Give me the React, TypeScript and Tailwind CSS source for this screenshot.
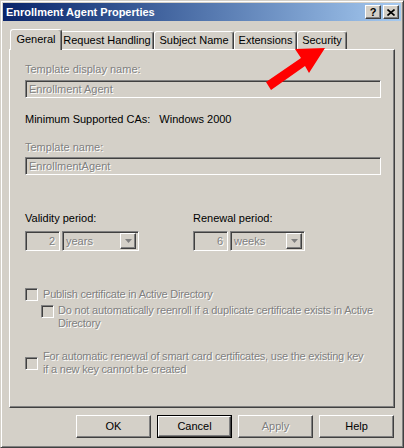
const raised =
  "border border-t-white border-l-white border-r-[#404040] border-b-[#404040] shadow-[inset_-1px_-1px_0_#808080]";
const sunken =
  "border border-t-[#808080] border-l-[#808080] border-r-white border-b-white shadow-[inset_1px_1px_0_#404040]";
const dim = "text-[#808080] [text-shadow:1px_1px_0_#fff]";

function Tab({ label, width, active }: { label: string; width: number; active?: boolean }) {
  return (
    <div
      style={{ width }}
      className={
        "flex items-start justify-center rounded-t-[3px] border border-b-0 border-t-white border-l-white border-r-[#404040] shadow-[inset_-1px_0_0_#808080] bg-[#d4d0c8] " +
        (active ? "relative z-10 -mx-[2px] h-[21px] pt-[3px] -mb-px" : "h-[18px] pt-[2px]")
      }
    >
      {label}
    </div>
  );
}

function Combo({ value, x }: { value: string; x: string }) {
  return (
    <div className={`flex h-[20px] ${x} ${sunken} items-center bg-[#d4d0c8] pl-[3px] pr-[2px]`}>
      <span className={`flex-1 ${dim}`}>{value}</span>
      <div className={`flex h-[16px] w-[16px] items-center justify-center ${raised} bg-[#d4d0c8]`}>
        <svg width="7" height="4" viewBox="0 0 7 4">
          <path d="M0 0h7L3.5 4z" fill="#808080" />
        </svg>
      </div>
    </div>
  );
}

function NumBox({ value }: { value: string }) {
  return (
    <div className={`flex h-[20px] w-[35px] ${sunken} items-center justify-end bg-[#d4d0c8] pr-[4px] ${dim}`}>
      {value}
    </div>
  );
}

function Check({ className = "" }: { className?: string }) {
  return <div className={`h-[13px] w-[13px] shrink-0 ${sunken} bg-[#d4d0c8] ${className}`} />;
}

function Button({ label, def, disabled }: { label: string; def?: boolean; disabled?: boolean }) {
  return (
    <div className={"h-[23px] w-[75px] " + (def ? "border border-black" : "")}>
      <div
        className={`flex h-full w-full items-center justify-center ${raised} ${disabled ? dim : "text-black"}`}
      >
        {label}
      </div>
    </div>
  );
}

export default function App() {
  return (
    <div className="relative h-[448px] w-[404px] overflow-hidden border border-t-[#d4d0c8] border-l-[#d4d0c8] border-r-[#404040] border-b-[#404040] bg-[#d4d0c8] p-[2px] font-['Liberation_Sans',Arial,sans-serif] text-[11px] leading-[13px] text-black shadow-[inset_1px_1px_0_#fff,inset_-1px_-1px_0_#808080]">
      {/* title bar */}
      <div className="flex h-[18px] items-center bg-gradient-to-r from-[#0a246a] to-[#a6caf0] pl-[3px] pr-[2px]">
        <span className="flex-1 font-bold text-white">Enrollment Agent Properties</span>
        <div className={`flex h-[14px] w-[16px] items-center justify-center ${raised} bg-[#d4d0c8] text-[11px] font-bold leading-none`}>
          ?
        </div>
        <div className={`ml-[2px] flex h-[14px] w-[16px] items-center justify-center ${raised} bg-[#d4d0c8]`}>
          <svg width="8" height="7" viewBox="0 0 8 7">
            <path d="M0.5 0.5l7 6M7.5 0.5l-7 6" stroke="#000" strokeWidth="1.6" />
          </svg>
        </div>
      </div>

      {/* tabs */}
      <div className="mt-[8px] flex items-end pl-[9px]">
        <Tab label="General" width={52} active />
        <Tab label="Request Handling" width={94} />
        <Tab label="Subject Name" width={80} />
        <Tab label="Extensions" width={63} />
        <Tab label="Security" width={50} />
      </div>

      {/* panel */}
      <div className="ml-[6px] flex h-[359px] w-[386px] flex-col border border-t-white border-l-white border-r-[#404040] border-b-[#404040] pl-[15px] pr-[12px] pt-[13px] shadow-[inset_-1px_-1px_0_#808080]">
        <div className={dim}>Template display name:</div>
        <div className={`mt-[4px] flex h-[18px] w-[356px] items-center ${sunken} pl-[3px] ${dim}`}>Enrollment Agent</div>
        <div className="mt-[15px] flex">
          <span>Minimum Supported CAs:</span>
          <span className="ml-[9px]">Windows 2000</span>
        </div>
        <div className={`mt-[15px] ${dim}`}>Template name:</div>
        <div className={`mt-[3px] flex h-[18px] w-[356px] items-center ${sunken} pl-[3px] ${dim}`}>EnrollmentAgent</div>

        <div className="mt-[37px] flex">
          <div className="w-[168px]">
            <div>Validity period:</div>
            <div className="mt-[6px] flex gap-[2px]">
              <NumBox value="2" />
              <Combo value="years" x="w-[77px]" />
            </div>
          </div>
          <div>
            <div>Renewal period:</div>
            <div className="mt-[6px] flex gap-[2px]">
              <NumBox value="6" />
              <Combo value="weeks" x="w-[75px]" />
            </div>
          </div>
        </div>

        <div className="mt-[37px] flex items-center gap-[5px]">
          <Check />
          <span className={`${dim} tracking-[-0.2px]`}>Publish certificate in Active Directory</span>
        </div>
        <div className="ml-[16px] mt-[3px] flex items-start gap-[4px]">
          <Check className="mt-px" />
          <span className={`${dim} tracking-[-0.2px]`}>
            Do not automatically reenroll if a duplicate certificate exists in Active
            <br />
            Directory
          </span>
        </div>
        <div className="mt-[20px] flex items-center gap-[5px]">
          <Check />
          <span className={`${dim} tracking-[-0.2px]`}>
            For automatic renewal of smart card certificates, use the existing key
            <br />
            if a new key cannot be created
          </span>
        </div>
      </div>

      {/* buttons */}
      <div className="mt-[7px] flex justify-end gap-[6px] pr-[7px]">
        <Button label="OK" />
        <Button label="Cancel" def />
        <Button label="Apply" disabled />
        <Button label="Help" />
      </div>

      {/* red arrow annotation */}
      <svg className="pointer-events-none absolute left-0 top-0" width="404" height="448" viewBox="0 0 404 448">
        <polygon
          points="265,81 300,57 294,48 324,47 308,72 304,65 270,89"
          fill="#ff0000"
        />
      </svg>
    </div>
  );
}
